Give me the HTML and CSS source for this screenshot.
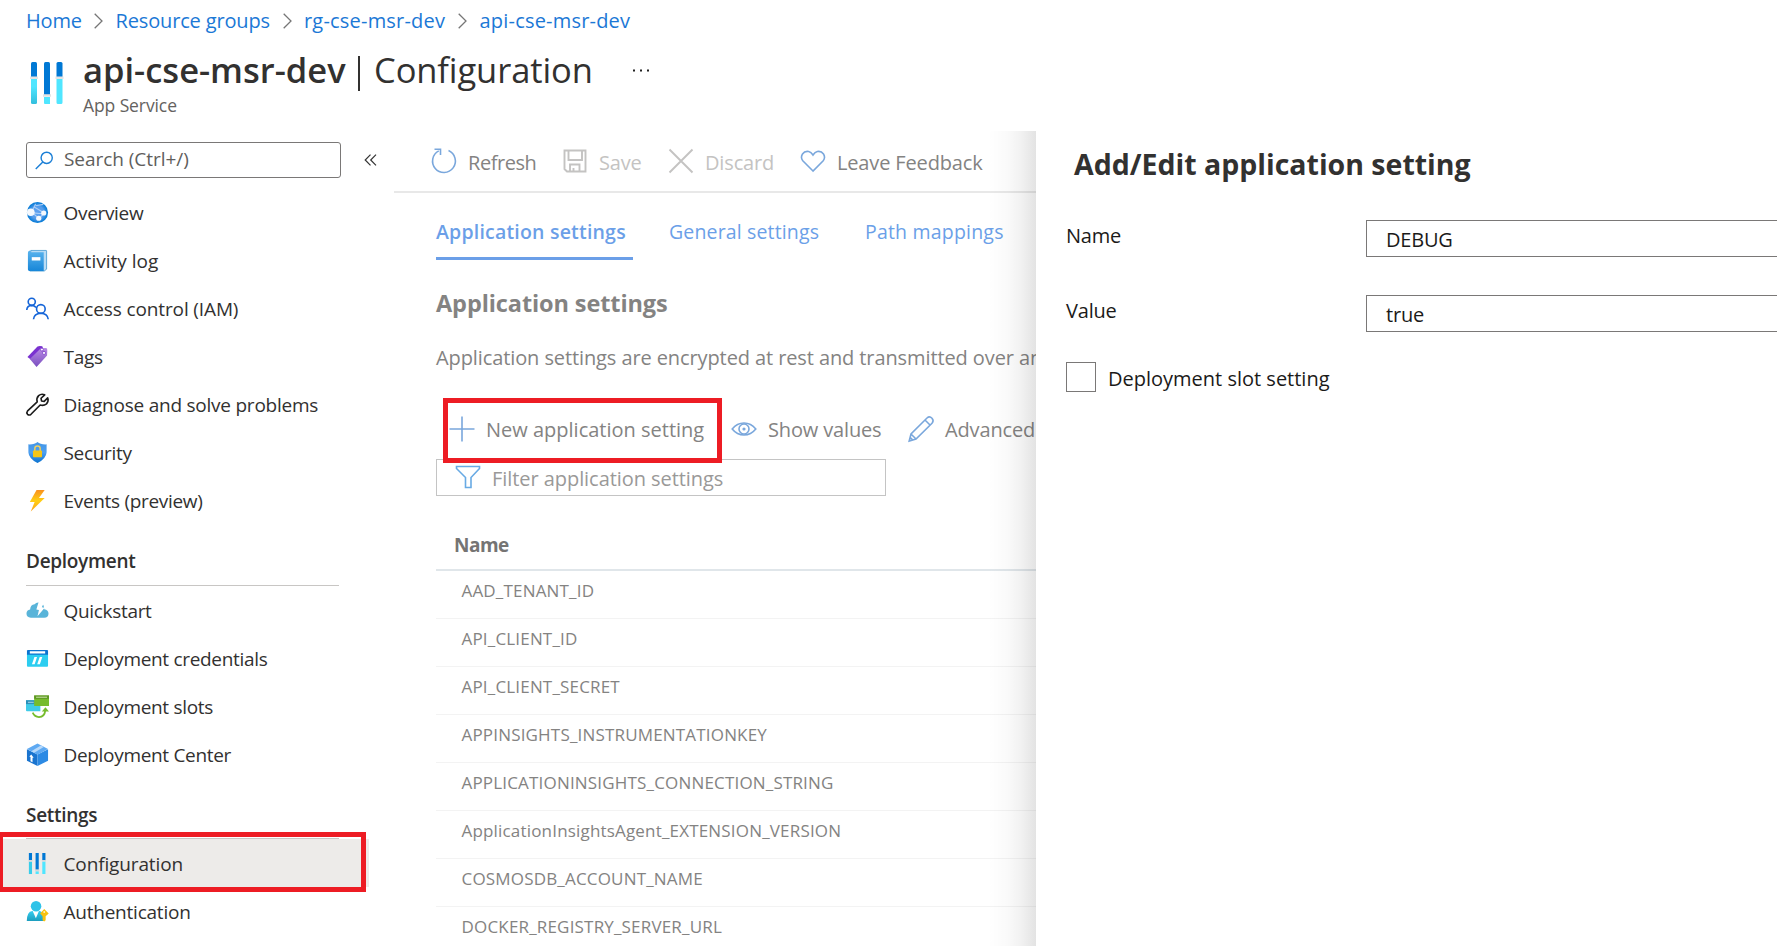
FILE: index.html
```html
<!DOCTYPE html>
<html lang="en">
<head>
<meta charset="utf-8">
<title>api-cse-msr-dev | Configuration</title>
<link rel="stylesheet" href="styles.css">
</head>
<body>
<div class="page">
  <nav class="crumbs">
    <a class="c1">Home</a><svg class="chev" viewBox="0 0 9 16"><path d="M.7 .7 8 8 .7 15.300"/></svg>
    <a class="c2">Resource groups</a><svg class="chev" viewBox="0 0 9 16"><path d="M.7 .7 8 8 .7 15.300"/></svg>
    <a class="c3">rg-cse-msr-dev</a><svg class="chev" viewBox="0 0 9 16"><path d="M.7 .7 8 8 .7 15.300"/></svg>
    <a class="c4">api-cse-msr-dev</a>
  </nav>
  <header class="title">
    <svg class="title-icon" viewBox="0 0 34 44">
      <defs><linearGradient id="cy" x1="0" y1="1" x2="0" y2="0"><stop offset="0" stop-color="#32bedd"/><stop offset=".7" stop-color="#50e6ff"/></linearGradient></defs>
      <g fill="#0078d4"><path d="M1 16V2.500Q1 1 2.500 1H5.500Q7 1 7 2.500V16z"/><path d="M14 34V2.500Q14 1 15.500 1H18.500Q20 1 20 2.500V34z"/><path d="M26.500 16V2.500Q26.500 1 28 1H31Q32.500 1 32.500 2.500V16z"/></g>
      <path fill="url(#cy)" d="M1 18H7V41.500Q7 43 5.500 43H2.500Q1 43 1 41.500z"/>
      <path fill="#50e6ff" d="M14 36H20V43H15Q14 43 14 42zM26.500 18H32.500V41.500Q32.500 43 31 43H28Q26.500 43 26.500 41.500z"/>
      <path fill="#e3e3e3" d="M0 15.500h8v2.500H0zM13 33.300h8v2.500h-8zM25.500 15.500h8v2.500h-8z"/>
    </svg>
    <div class="title-text">
      <h1><b>api-cse-msr-dev</b><i></i><span>Configuration</span><svg class="dots" viewBox="0 0 18 3"><path fill="#222" d="M1 .5h2v2H1zM8 .5h2v2H8zM15 .5h2v2h-2z"/></svg></h1>
      <p>App Service</p>
    </div>
  </header>
  <div class="body">
    <aside class="side">
      <div class="search-row">
        <div class="search"><svg viewBox="0 0 20 20"><g fill="none" stroke="#1b7fd6" stroke-width="1.500"><circle cx="12.300" cy="7.200" r="5.900"/><path d="M8.200 11.500.8 18.900"/></g></svg><span>Search (Ctrl+/)</span></div>
        <svg class="collapse" viewBox="0 0 13 12"><path d="M6.500.6 1.200 6l5.300 5.400M12 .6 6.700 6l5.300 5.400"/></svg>
      </div>
      <ul class="nav">
        <li><svg viewBox="0 0 24 24"><defs><radialGradient id="gl"><stop offset="0" stop-color="#5ea0ef"/><stop offset=".6" stop-color="#559cec"/><stop offset="1" stop-color="#0078d4"/></radialGradient></defs><circle cx="12" cy="12" r="11" fill="url(#gl)"/><path d="M6 11.500 10 3M6 11.500 13.500 18.500 19 12.500 9 6.500M13.500 18.500 19 12.500M6 11.500Q12 14 19 12.500M10 5l8-1.500" fill="none" stroke="#a9cdf6" stroke-width="1.200"/><g fill="#f4f8fd"><circle cx="5" cy="11.700" r="4"/><circle cx="18.500" cy="12.500" r="2.700"/><circle cx="13.300" cy="18" r="2.700"/></g></svg><span>Overview</span></li>
        <li><svg viewBox="0 0 24 24"><defs><linearGradient id="bk" x1="0" y1="0" x2="0" y2="1"><stop offset="0" stop-color="#5ab4ee"/><stop offset="1" stop-color="#1786d8"/></linearGradient></defs><path fill="#b9dcf5" stroke="#3e95cf" stroke-width=".8" d="M5 1.500H21Q21.500 1.500 21.500 2V21l-2.500 2H4z"/><path fill="url(#bk)" d="M2 4.500Q2 1.500 4.500 1.500L5 3.500H18.500V23H3.500Q2 23 2 21.500z"/><path fill="#fff" d="M6 8.500h9v3.500H6z"/></svg><span class="wide">Activity log</span></li>
        <li><svg viewBox="0 0 24 24"><g fill="none" stroke="#1565d8" stroke-width="1.700"><circle cx="6" cy="5" r="3.700"/><circle cx="15.500" cy="12.500" r="4.500"/><path d="M.8 13.500Q1 9 6 8.700 9 8.800 10.500 11M7.800 23.200Q8.500 17.200 15.500 17 22.500 17.200 23.200 23.200"/></g></svg><span class="mid">Access control (IAM)</span></li>
        <li><svg viewBox="0 0 24 24"><defs><linearGradient id="tg" x1="0" y1="0" x2="0" y2="1"><stop offset="0" stop-color="#b98ae4"/><stop offset="1" stop-color="#7a4fc0"/></linearGradient></defs><path fill="#7a32d0" d="M1.500 12.500 12 1.500Q13 .8 17 1.200L18 4 5 15z"/><path fill="url(#tg)" d="M4 14.500 15.500 3.500 21 3.200Q22.500 3.500 22.200 6L22 11 11 23z"/><g fill="#fff" stroke="#6f2bc4" stroke-width=".7"><circle cx="16.600" cy="4.800" r="1.500"/><circle cx="18.800" cy="8.300" r="1.600"/></g></svg><span>Tags</span></li>
        <li><svg viewBox="0 0 24 24"><path fill="none" stroke="#1b1b1b" stroke-width="1.700" stroke-linejoin="round" d="M19.500 1.900 15.700 5.500 16.200 8.300 19 8.700 22.600 5.100Q24 8.500 21.400 11.300 18.500 13.600 14.800 12.500L5.200 22.200Q3.300 23.700 1.600 22.300 .2 20.500 1.700 18.600L11.700 9.200Q10.500 5.500 13.200 2.700 16 .4 19.500 1.900z"/></svg><span class="diag">Diagnose and solve problems</span></li>
        <li><svg viewBox="0 0 24 24"><defs><linearGradient id="sh" x1="0" y1="0" x2="0" y2="1"><stop offset="0" stop-color="#4295e6"/><stop offset=".5" stop-color="#4fa0f0"/><stop offset="1" stop-color="#0a72cf"/></linearGradient></defs><path fill="url(#sh)" d="M12 1Q15 3.800 21.500 3.500V12Q21 18.500 12 23 3 18.500 2.500 12V3.500Q9 3.800 12 1z"/><path d="M9.200 11V8Q9.200 5.300 12 5.300T14.800 8v3" fill="none" stroke="#f0d060" stroke-width="1.500"/><rect x="7.300" y="10" width="9.400" height="7" rx=".8" fill="#f5c516"/></svg><span>Security</span></li>
        <li><svg viewBox="0 0 24 24"><defs><linearGradient id="bo" x1="0" y1="0" x2="0" y2="1"><stop offset="0" stop-color="#f9901f"/><stop offset=".5" stop-color="#ffcf14"/><stop offset="1" stop-color="#fba21b"/></linearGradient></defs><path fill="url(#bo)" d="M11 1H19.500L13.500 9.500H19.500L5 23.500 9 13.500H4z"/></svg><span>Events (preview)</span></li>
      </ul>
      <h3 class="group h-dep"><span>Deployment</span></h3>
      <ul class="nav">
        <li><svg viewBox="0 0 24 24"><path fill="#59b4d9" d="M5 19.500Q.5 19.300.5 15.200.6 11.500 4.300 11 4.500 6 9 5.500 11 3 14.500 4 18.500 4.500 18.800 9 19 10 19 10.700 23.500 11.500 23.500 15.300 23.300 19.500 19 19.500z"/><path fill="#fff" d="M13.500 2 19 3.500 16.500 8.500 19.500 9 12 18 13.500 11.500 10.800 11z"/></svg><span>Quickstart</span></li>
        <li><svg viewBox="0 0 24 24"><path fill="#2ccdf0" d="M1 7H23V19.500Q23 20.500 22 20.500H2Q1 20.500 1 19.500z"/><path fill="#0b73d0" d="M2 3H22Q23 3 23 4V8H1V4Q1 3 2 3z"/><path fill="#fff" d="M4 4.500h16v2.300H4zM8.800 10.500H11.500L9 18H6.200zM14.300 10.500H17L14.500 18h-2.800z"/></svg><span>Deployment credentials</span></li>
        <li><svg viewBox="0 0 24 24"><path fill="#3fcbe8" d="M0 5.500H15V17H1Q0 17 0 16z"/><path fill="#2b8fb8" d="M0 5.500H9V9.500H0z"/><path fill="#8fc6dd" d="M2 7h6v1.400H2z"/><path fill="#76bc2d" d="M8.500 .500H24V11.500H8.500z"/><path fill="#5e9624" d="M8.500 .500H24V4H8.500z"/><path fill="#b5d48f" d="M10.500 1.700h11.500v1.300H10.500z"/><path d="M7 18.500Q9 23 13.500 23 19.500 22.500 20 16.500" fill="none" stroke="#76bc2d" stroke-width="1.900"/><path fill="#76bc2d" d="M16.500 17.200 20.300 12.800 24 17.200z"/></svg><span>Deployment slots</span></li>
        <li><svg viewBox="0 0 24 24"><path fill="#1a74cf" d="M1 6.500 12 12V24L1 18.500z"/><path fill="#2c8ae4" d="M23 6.500 12 12V24L23 18.500z"/><path fill="#5ea9f2" d="M12 .500 23 6.300 12 12.200 1 6.300z"/><path fill="#b7d9fb" d="M5.500 8.700 15.500 2.700 18.500 4.200 8.500 10.200z"/><path fill="#fff" d="M5.500 12 8 15.500 6.800 15.300V20L4.700 19V14.500L3.500 14z"/></svg><span>Deployment Center</span></li>
      </ul>
      <h3 class="group h-set"><span>Settings</span></h3>
      <ul class="nav">
        <li class="active"><svg viewBox="0 0 24 24"><path fill="#0078d4" d="M3 1h3.300v7.300H3zM10 1h3.300v17.500H10zM17 1h3.300v7.300H17z"/><path fill="#38cdea" d="M3 10h3.300v13H3z"/><path fill="#50e6ff" d="M10 20h3.300v3H10zM17 10h3.300v13H17z"/><path fill="#d5d8db" d="M2.500 8.300h4.300V10H2.500zM9.500 18.300h4.300V20H9.500zM16.500 8.300h4.300V10h-4.300z"/></svg><span class="mid">Configuration</span></li>
        <li><svg viewBox="0 0 24 24"><defs><linearGradient id="us" x1="0" y1="0" x2="0" y2="1"><stop offset="0" stop-color="#35cdf0"/><stop offset="1" stop-color="#1c9dbd"/></linearGradient></defs><path fill="url(#us)" d="M.8 22Q1 12 6.500 11.500H14.500Q17.500 12 19 22z"/><path fill="#fff" d="M7 11.500h6.500L10.300 19z"/><circle cx="10.500" cy="6.500" r="5.500" fill="#2fc3e8"/><path fill="#f8c10f" d="M19 9.500 23.700 14 20.500 17V21L19 22.500 17.300 21V17L14.700 14z"/><circle cx="19" cy="12.500" r="1" fill="#fff2c0"/></svg><span class="diag">Authentication</span></li>
      </ul>
      <div class="mark mark-nav"></div>
    </aside>

    <main class="main">
      <div class="toolbar">
        <div class="tool t1"><svg viewBox="0 0 26 26"><path d="M17.500 2.600A11.400 11.400 0 1 1 7.800 2.900M3.500 1.300H9.500V7"/></svg><span>Refresh</span></div>
        <div class="tool t2 off"><svg viewBox="0 0 26 26"><path d="M2.500 2.500H23.500V23.500H5L2.500 21zM6.500 2.500V12H20V2.500M8 23.500V16.500H17.500V23.500M11.500 23V20"/></svg><span>Save</span></div>
        <div class="tool t3 off"><svg viewBox="0 0 26 26"><path d="M1.500 1.500l23 23M24.500 1.500l-23 23"/></svg><span>Discard</span></div>
        <div class="tool t4"><svg viewBox="0 0 26 26"><path d="M13 23 2.800 12.800Q.3 9.500 2.500 6 4.800 2.700 8.700 3.500 11 4 13 7 15 4 17.300 3.500 21.200 2.700 23.500 6 25.700 9.500 23.200 12.800z"/></svg><span>Leave Feedback</span></div>
      </div>
      <div class="content">
        <div class="tabs"><a class="on"><span>Application settings</span></a><a class="tb2"><span>General settings</span></a><a class="tb3"><span>Path mappings</span></a></div>
        <h2>Application settings</h2>
        <p class="desc">Application settings are encrypted at rest and transmitted over an</p>
        <div class="commands">
          <div class="tool k1"><svg viewBox="0 0 26 26"><path d="M13 .5v25M.5 13h25"/></svg><span>New application setting</span><div class="mark mark-new"></div></div>
          <div class="tool k2"><svg viewBox="0 0 26 26"><path d="M1.200 13Q6 7 13 7T24.800 13Q20 19 13 19T1.200 13z"/><circle cx="13" cy="13" r="5"/><circle cx="13" cy="13" r=".8"/></svg><span>Show values</span></div>
          <div class="tool k3"><svg viewBox="0 0 26 26"><path d="M1.200 25 3 18 19 2Q21.500-.3 24 2.200 26.200 4.700 24 7.200L8 23zM3 18l5 5M17 4l5 5M2.300 21.500l2.500 2.500"/></svg><span>Advanced</span></div>
        </div>
        <div class="filter"><svg viewBox="0 0 26 24"><path d="M1.500 1.500H24.500V3.500L16 12.500V22.500H10.500V12.500L1.500 3.500z"/></svg><span>Filter application settings</span></div>
        <div class="thead">Name</div>
        <ul class="rows">
          <li><span>AAD_TENANT_ID</span></li><li><span>API_CLIENT_ID</span></li><li><span>API_CLIENT_SECRET</span></li><li><span>APPINSIGHTS_INSTRUMENTATIONKEY</span></li><li><span>APPLICATIONINSIGHTS_CONNECTION_STRING</span></li><li><span>ApplicationInsightsAgent_EXTENSION_VERSION</span></li><li><span>COSMOSDB_ACCOUNT_NAME</span></li><li><span>DOCKER_REGISTRY_SERVER_URL</span></li>
        </ul>
      </div>
    </main>

    <section class="panel">
      <h2>Add/Edit application setting</h2>
      <div class="field"><label>Name</label><div class="input">DEBUG</div></div>
      <div class="field"><label>Value</label><div class="input">true</div></div>
      <div class="check"><i></i><span>Deployment slot setting</span></div>
    </section>
  </div>
</div>
</body>
</html>
```
FILE: styles.css
```css
* { box-sizing: border-box; }
body { margin: 0; background: #fff; font-family: "Open Sans", "Noto Sans", sans-serif; font-size: 19px; color: #323130; }
h1, h2, h3, p, ul { margin: 0; padding: 0; font-weight: 400; }
ul { list-style: none; }
svg { display: block; flex: none; overflow: visible; }
.page { width: 1780px; height: 952px; overflow: hidden; display: flex; flex-direction: column; }

.crumbs { height: 44px; padding: 0 0 0 26px; display: flex; align-items: center; color: #1b78d6; white-space: nowrap; font-size: 20px; letter-spacing: -.15px; line-height: 40px; }
.crumbs a { flex: none; margin-top: -2px; }
.c1 { width: 68px; } .c2 { width: 167px; } .c3 { width: 154px; }
.c3, .c4 { letter-spacing: .2px; }
.chev { width: 9px; height: 16px; margin-right: 12.500px; margin-top: -3px; }
.chev path { fill: none; stroke: #767676; stroke-width: 1.300; }

.title { height: 87px; padding-left: 30px; display: flex; }
.title-icon { width: 34px; height: 44px; margin-top: 17px; }
.title-text { margin-left: 19px; white-space: nowrap; }
.title h1 { display: flex; align-items: center; font-size: 34.500px; height: 51px; line-height: 51px; color: #323130; }
.title h1 b { font-weight: 600; width: 275px; letter-spacing: 0; }
.title h1 i { width: 2px; height: 35px; margin-top: 7px; background: #323130; margin-right: 14px; }
.title h1 span { width: 258px; letter-spacing: -.1px; }
.dots { width: 18px; height: 3px; margin-top: 2px; }
.title p { font-size: 17.500px; line-height: 20px; color: #646260; letter-spacing: -.1px; }

.body { display: flex; height: 815px; }
.side { position: relative; width: 394px; flex: none; }
.search-row { height: 57px; padding: 11px 0 0 26px; display: flex; align-items: flex-start; }
.search { width: 315px; height: 36px; border: 1px solid #7a7877; border-radius: 3px; display: flex; align-items: center; padding-left: 8px; color: #605e5c; letter-spacing: -.05px; line-height: 32px; }
.search svg { width: 19px; height: 19px; margin-right: 10px; }
.search span { margin-top: -3px; }
.collapse { width: 13px; height: 12px; margin: 12px 0 0 23px; }
.collapse path { fill: none; stroke: #333; stroke-width: 1.200; }
.nav li { height: 48px; line-height: 46px; padding-left: 26px; display: flex; align-items: center; white-space: nowrap; letter-spacing: -.32px; }
.nav li span { margin-top: 2px; }
.nav svg { width: 23px; height: 23px; margin-right: 14.500px; }
.nav .wide { letter-spacing: 0; }
.nav .mid { letter-spacing: -.13px; }
.nav .diag { letter-spacing: -.23px; }
.nav .active { background: #edebe9; width: 369px; }
.group { margin-left: 26px; width: 313px; border-bottom: 1px solid #c8c6c4; font-weight: 600; font-size: 19px; letter-spacing: -.3px; }
.h-dep { height: 62px; line-height: 75px; }
.h-set { height: 61px; line-height: 75px; }
.mark { position: absolute; border: 5px solid #ed1c24; }
.mark-nav { left: -2px; top: 701px; width: 368px; height: 60px; }

.main { position: relative; width: 642px; flex: none; overflow: hidden; color: #848382; white-space: nowrap; }
.main::after { content: ""; position: absolute; right: 0; top: 0; width: 48px; height: 100%; background: linear-gradient(to right, rgba(0,0,0,0), rgba(0,0,0,.02) 40%, rgba(0,0,0,.055) 70%, rgba(0,0,0,.11)); }
.toolbar { height: 62px; border-bottom: 2px solid #e8e8e8; padding-left: 37px; display: flex; align-items: center; }
.tool { position: relative; flex: none; display: flex; align-items: center; font-size: 20px; line-height: 58px; letter-spacing: -.15px; }
.tool svg { width: 26px; height: 26px; margin-right: 11px; fill: none; stroke: #7aa7dc; stroke-width: 1.600; }
.tool.off { color: #c4c3c2; }
.tool.off svg { stroke: #c4c3c2; stroke-width: 1.900; }
.toolbar svg { margin-top: 0; }
.toolbar span { margin-top: 4px; }
.toolbar .t1 { width: 131px; letter-spacing: -.45px; } .t2 { width: 106px; } .t3 { width: 132px; }
.content { padding-left: 42px; }
.tabs { display: flex; height: 67px; color: #6b9fe8; font-size: 19.500px; letter-spacing: .15px; }
.tabs a { flex: none; line-height: 78px; height: 67px; }
.tabs .on { width: 197px; border-bottom: 3px solid #6b9fe8; font-weight: 600; letter-spacing: .2px; }
.tb2 { margin-left: 36px; width: 196px; }
.tb3 { letter-spacing: .2px; }
.content h2 { font-weight: 700; font-size: 23.500px; line-height: 30px; margin-top: 28px; letter-spacing: -.1px; }
.desc { font-size: 20px; line-height: 30px; margin-top: 25px; letter-spacing: -.1px; }
.commands { display: flex; height: 60px; margin-top: 26px; padding-left: 13px; align-items: center; }
.commands .k1 { width: 282px; letter-spacing: 0; } .k2 { width: 177px; }
.commands span { margin-top: 2px; }
.commands svg { margin-top: -1px; }
.mark-new { left: -6px; top: -1px; width: 279px; height: 65px; z-index: 2; }
.filter { width: 450px; height: 37px; border: 1px solid #c4c4c4; display: flex; align-items: center; padding-left: 18px; color: #9a9998; font-size: 20px; letter-spacing: -.06px; line-height: 33px; }
.filter svg { width: 26px; height: 24px; margin: -2px 11px 0 0; fill: none; stroke: #68aae4; stroke-width: 1.600; }
.filter span { margin-top: 2px; }
.thead { height: 75px; padding: 33px 0 0 18px; border-bottom: 2px solid #e0e6ea; font-weight: 700; font-size: 19px; line-height: 32px; color: #757473; letter-spacing: -.5px; }
.rows li { height: 48px; line-height: 40px; padding-left: 25.500px; border-bottom: 1px solid #f3f3f3; font-size: 17px; letter-spacing: .18px; }

.panel { width: 741px; flex: none; padding: 11px 0 0 30px; color: #1b1a19; overflow: hidden; }
.panel h2 { font-weight: 700; font-size: 28.500px; line-height: 44px; padding-left: 8px; color: #323130; margin-bottom: 34px; }
.field { display: flex; height: 75px; font-size: 20px; letter-spacing: -.2px; }
.field label { flex: none; width: 300px; line-height: 32px; }
.input { flex: none; width: 411px; height: 37px; border: 1px solid #7a7877; border-right: 0; padding-left: 19px; line-height: 38px; }
.check { display: flex; align-items: center; margin-top: -8px; font-size: 20px; height: 30px; letter-spacing: 0; }
.check i { width: 30px; height: 30px; border: 1px solid #7a7877; margin-right: 12px; }
.check span { margin-top: 3px; }
```
